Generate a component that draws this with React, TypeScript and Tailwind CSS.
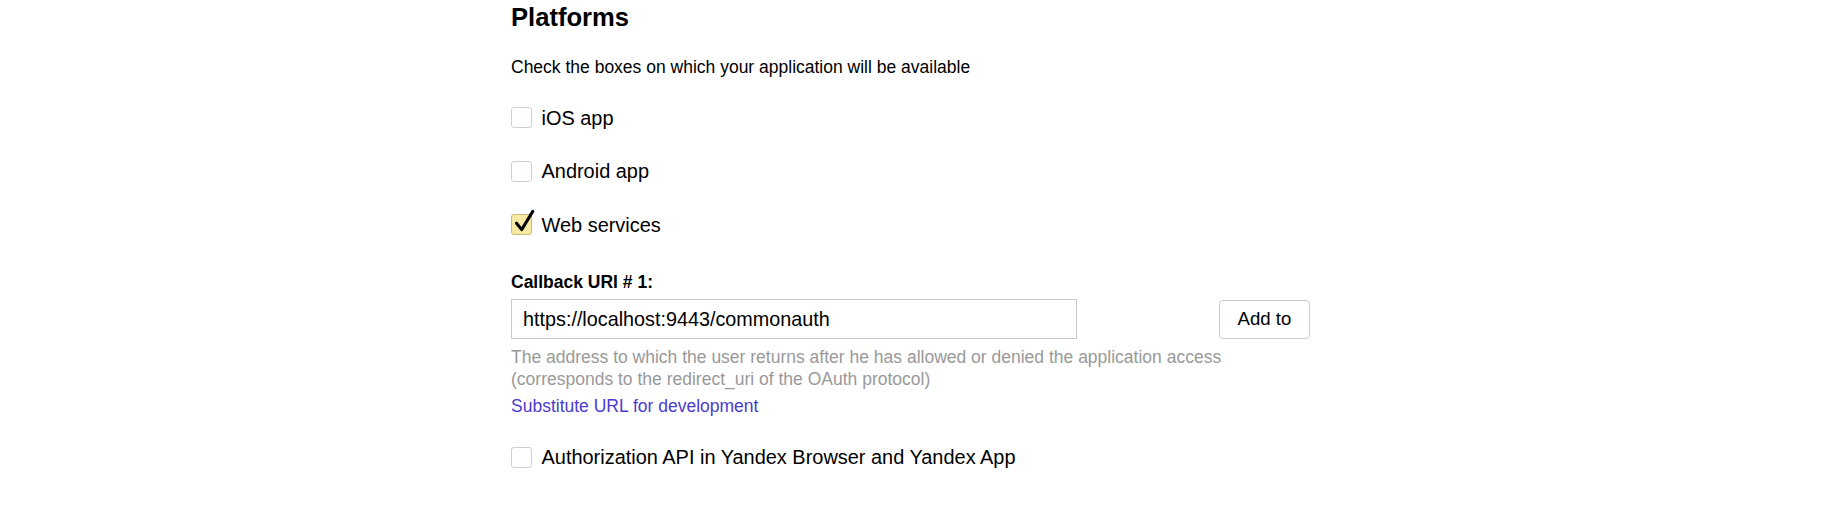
import { useState } from 'react';

type PlatformProps = {
  label: string;
  checked?: boolean;
  className?: string;
};

function Platform({ label, checked = false, className = '' }: PlatformProps) {
  const [isChecked, setChecked] = useState(checked);
  return (
    <label
      className={`flex h-[21px] cursor-pointer items-center gap-[9.5px] ${className}`}
      onClick={() => setChecked(!isChecked)}
    >
      <span
        className={`relative block h-[21px] w-[21px] shrink-0 rounded-[3px] border ${
          isChecked
            ? 'border-[#cdbb78] bg-[#f9eaa3]'
            : 'border-[#d0d0d0] bg-white'
        }`}
      >
        {isChecked && (
          <svg
            className="absolute left-[2px] top-[-6px]"
            width="22"
            height="24"
            viewBox="0 0 22 24"
            fill="none"
          >
            <path
              d="M2.5 14.2 L7.7 20.6 L18.8 2.4"
              stroke="#000"
              strokeWidth="3"
              strokeLinecap="round"
              strokeLinejoin="round"
            />
          </svg>
        )}
      </span>
      <span className="text-[19.95px] leading-[22px]">{label}</span>
    </label>
  );
}

export default function App() {
  const [uri, setUri] = useState('https://localhost:9443/commonauth');

  return (
    <div className="min-h-screen bg-white font-['Liberation_Sans',Arial,sans-serif] text-black">
      <div className="mx-auto w-[804px] pt-[2px]">
        <h2 className="text-[25.6px] font-bold leading-[30px]">Platforms</h2>
        <p className="mt-[22.6px] text-[17.5px] leading-[24px]">
          Check the boxes on which your application will be available
        </p>

        <div className="mt-[28.7px] flex flex-col gap-[32.5px]">
          <Platform label="iOS app" />
          <Platform label="Android app" />
          <Platform label="Web services" checked />
        </div>

        <div className="mt-[35px] text-[17.5px] font-bold leading-[24px]">
          Callback URI # 1:
        </div>
        <div className="mt-[5px] flex items-center">
          <input
            className="h-[40px] w-[566px] border border-[#c9c9c9] px-[11px] text-[19.8px] outline-none"
            type="text"
            value={uri}
            onChange={(e) => setUri(e.target.value)}
          />
          <button className="ml-[142px] h-[39px] w-[91px] rounded-[4px] border border-[#cccccc] bg-white text-[18.6px]">
            Add to
          </button>
        </div>
        <p className="mt-[6.4px] text-[17.5px] leading-[22.5px] text-[#999999]">
          The address to which the user returns after he has allowed or denied
          the application access
          <br />
          (corresponds to the redirect_uri of the OAuth protocol)
        </p>
        <a
          href="#"
          className="mt-[5.8px] block w-fit text-[17.5px] leading-[21px] text-[#4b3bcf]"
        >
          Substitute URL for development
        </a>

        <Platform
          className="mt-[29.1px]"
          label="Authorization API in Yandex Browser and Yandex App"
        />
      </div>
    </div>
  );
}
